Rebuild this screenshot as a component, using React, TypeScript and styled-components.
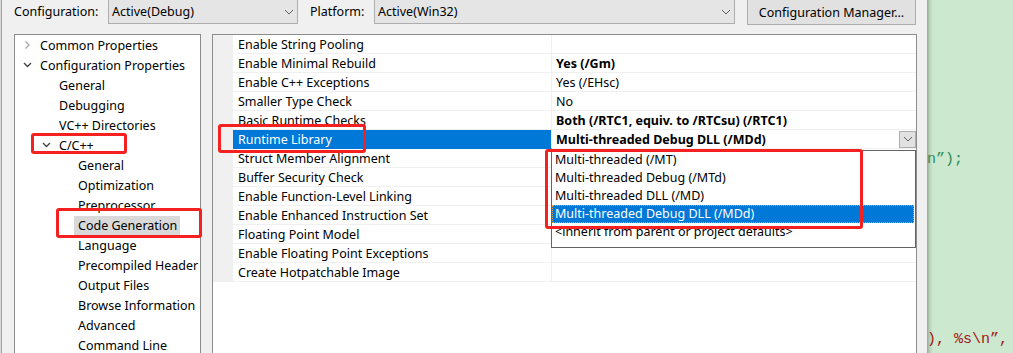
import React from 'react';
import styled, { createGlobalStyle } from 'styled-components';

const GlobalStyle = createGlobalStyle`
  html, body {
    margin: 0;
    padding: 0;
    background: #cce8cf;
  }
  body {
    font-family: "Noto Sans", "Liberation Sans", sans-serif;
    font-size: 12.5px;
    color: #000;
  }
`;

const Screen = styled.div`
  position: relative;
  display: flex;
  width: 1013px;
  height: 353px;
  overflow: hidden;
`;

const Dialog = styled.div`
  width: 903px;
  flex: none;
  display: flex;
  flex-direction: column;
  background: #f0f0f0;
  border-left: 1px solid #dadada;
  box-shadow: inset 1px 0 0 #a0a0a0;
  padding: 0 10px 0 13px;
`;

const Toolbar = styled.div`
  display: flex;
  align-items: flex-start;
  height: 35px;
  margin-top: -1px;
  flex: none;
`;

const Label = styled.div<{ w: number; ml?: number }>`
  width: ${p => p.w}px;
  margin-left: ${p => p.ml ?? 0}px;
  height: 25px;
  line-height: 25px;
  white-space: nowrap;
`;

const Combo = styled.div<{ w: number }>`
  width: ${p => p.w}px;
  height: 25px;
  box-sizing: border-box;
  border: 1px solid #adadad;
  background: #e5e5e5;
  display: flex;
  align-items: center;
  justify-content: space-between;
  padding: 0 3px 0 3px;
`;

const Button = styled.div`
  width: 169px;
  height: 26px;
  margin-left: 12px;
  box-sizing: border-box;
  border: 1px solid #adadad;
  background: #e1e1e1;
  display: flex;
  align-items: center;
  justify-content: center;
`;

const Main = styled.div`
  display: flex;
  gap: 11px;
  flex: 1;
  min-height: 0;
`;

const Panel = styled.div<{ w: number }>`
  width: ${p => p.w}px;
  height: 340px;
  flex: none;
  box-sizing: border-box;
  border: 1px solid #8c8c8c;
  background: #fff;
`;

const TreeRow = styled.div<{ level: number }>`
  display: flex;
  align-items: center;
  height: 20px;
  padding-left: ${p => 5 + p.level * 19}px;
  white-space: nowrap;
`;

const Twisty = styled.span`
  width: 16px;
  height: 20px;
  flex: none;
  display: flex;
  align-items: center;
`;

const TreeText = styled.span<{ selected?: boolean }>`
  padding: 0 3px 0 4px;
  height: 19px;
  line-height: 19px;
  background: ${p => (p.selected ? '#d9d9d9' : 'transparent')};
`;

const GridRow = styled.div`
  display: grid;
  grid-template-columns: 20px 319px 1fr;
  height: 19px;
`;

const Gutter = styled.div`
  background: #f0f0f0;
`;

const NameCell = styled.div<{ selected?: boolean }>`
  box-sizing: border-box;
  border-bottom: 1px solid #f0f0f0;
  border-right: 1px solid #f0f0f0;
  padding: 1px 0 0 5px;
  line-height: 17px;
  white-space: nowrap;
  background: ${p => (p.selected ? '#0078d7' : '#fff')};
  color: ${p => (p.selected ? '#fff' : '#000')};
  border-bottom-color: ${p => (p.selected ? '#0078d7' : '#f0f0f0')};
`;

const ValueCell = styled.div<{ bold?: boolean }>`
  position: relative;
  box-sizing: border-box;
  border-bottom: 1px solid #f0f0f0;
  padding: 1px 0 0 4px;
  line-height: 17px;
  white-space: nowrap;
  font-weight: ${p => (p.bold ? 700 : 400)};
  display: flex;
  align-items: center;
  justify-content: space-between;
`;

const DropButton = styled.span`
  width: 17px;
  height: 17px;
  box-sizing: border-box;
  border: 1px solid #adadad;
  background: #e1e1e1;
  display: flex;
  align-items: center;
  justify-content: center;
  margin-top: -1px;
`;

const DropList = styled.div`
  position: absolute;
  left: 551px;
  top: 150px;
  width: 365px;
  box-sizing: border-box;
  border: 1px solid #646464;
  background: #fff;
  padding-bottom: 6px;
`;

const DropItem = styled.div<{ selected?: boolean }>`
  height: 18px;
  line-height: 18px;
  padding-left: 3px;
  margin-right: 1px;
  white-space: nowrap;
  box-sizing: border-box;
  background: ${p => (p.selected ? '#0078d7' : '#fff')};
  color: ${p => (p.selected ? '#fff' : '#000')};
  outline: ${p => (p.selected ? '1px dotted #f0a030' : 'none')};
  outline-offset: -1px;
`;

const Editor = styled.div`
  flex: 1;
  background: linear-gradient(to right, rgba(0, 0, 0, 0.28), rgba(0, 0, 0, 0.08) 3px, rgba(0, 0, 0, 0) 6px), #cce8cf;
  padding-top: 151px;
  font-family: "Liberation Mono", "DejaVu Sans Mono", monospace;
  font-size: 15px;
  line-height: 18px;
  white-space: pre;
  overflow: hidden;
`;

const CodeLine = styled.div<{ color: string }>`
  height: 18px;
  color: ${p => p.color};
`;

const Mark = styled.div`
  position: absolute;
  box-sizing: border-box;
  border: 3px solid #f52020;
  border-radius: 3px;
`;

const Chevron: React.FC<{ open?: boolean; light?: boolean }> = ({ open, light }) => (
  <svg width="16" height="20" viewBox="0 0 16 20">
    {open ? (
      <polyline points="4,8 7.5,11.5 11,8" fill="none" stroke="#404040" strokeWidth="1.3" />
    ) : (
      <polyline points="5.5,6.5 9,10 5.5,13.5" fill="none" stroke={light ? '#a6a6a6' : '#404040'} strokeWidth="1.3" />
    )}
  </svg>
);

const ComboArrow: React.FC = () => (
  <svg width="10" height="6" viewBox="0 0 10 6">
    <polyline points="1,1 5,5 9,1" fill="none" stroke="#606060" strokeWidth="1" />
  </svg>
);

const tree: { text: string; level: number; twisty?: 'open' | 'closed'; selected?: boolean }[] = [
  { text: 'Common Properties', level: 0, twisty: 'closed' },
  { text: 'Configuration Properties', level: 0, twisty: 'open' },
  { text: 'General', level: 1 },
  { text: 'Debugging', level: 1 },
  { text: 'VC++ Directories', level: 1 },
  { text: 'C/C++', level: 1, twisty: 'open' },
  { text: 'General', level: 2 },
  { text: 'Optimization', level: 2 },
  { text: 'Preprocessor', level: 2 },
  { text: 'Code Generation', level: 2, selected: true },
  { text: 'Language', level: 2 },
  { text: 'Precompiled Header', level: 2 },
  { text: 'Output Files', level: 2 },
  { text: 'Browse Information', level: 2 },
  { text: 'Advanced', level: 2 },
  { text: 'Command Line', level: 2 },
];

const props: { name: string; value?: string; bold?: boolean; selected?: boolean }[] = [
  { name: 'Enable String Pooling' },
  { name: 'Enable Minimal Rebuild', value: 'Yes (/Gm)', bold: true },
  { name: 'Enable C++ Exceptions', value: 'Yes (/EHsc)' },
  { name: 'Smaller Type Check', value: 'No' },
  { name: 'Basic Runtime Checks', value: 'Both (/RTC1, equiv. to /RTCsu) (/RTC1)', bold: true },
  { name: 'Runtime Library', value: 'Multi-threaded Debug DLL (/MDd)', bold: true, selected: true },
  { name: 'Struct Member Alignment' },
  { name: 'Buffer Security Check' },
  { name: 'Enable Function-Level Linking' },
  { name: 'Enable Enhanced Instruction Set' },
  { name: 'Floating Point Model' },
  { name: 'Enable Floating Point Exceptions' },
  { name: 'Create Hotpatchable Image' },
];

const options = [
  'Multi-threaded (/MT)',
  'Multi-threaded Debug (/MTd)',
  'Multi-threaded DLL (/MD)',
  'Multi-threaded Debug DLL (/MDd)',
  '<inherit from parent or project defaults>',
];

const App: React.FC = () => (
  <>
    <GlobalStyle />
    <Screen>
      <Dialog>
        <Toolbar>
          <Label w={94}>Configuration:</Label>
          <Combo w={190}>
            <span>Active(Debug)</span>
            <ComboArrow />
          </Combo>
          <Label w={64} ml={12}>Platform:</Label>
          <Combo w={361}>
            <span>Active(Win32)</span>
            <ComboArrow />
          </Combo>
          <Button>Configuration Manager...</Button>
        </Toolbar>
        <Main>
          <Panel w={187}>
            {tree.map((t, i) => (
              <TreeRow key={i} level={t.level}>
                <Twisty>
                  {t.twisty && <Chevron open={t.twisty === 'open'} light={t.twisty === 'closed'} />}
                </Twisty>
                <TreeText selected={t.selected}>{t.text}</TreeText>
              </TreeRow>
            ))}
          </Panel>
          <Panel w={705}>
            {props.map((p, i) => (
              <GridRow key={i}>
                <Gutter />
                <NameCell selected={p.selected}>{p.name}</NameCell>
                <ValueCell bold={p.bold}>
                  <span>{p.value}</span>
                  {p.selected && (
                    <DropButton>
                      <ComboArrow />
                    </DropButton>
                  )}
                </ValueCell>
              </GridRow>
            ))}
          </Panel>
        </Main>
      </Dialog>
      <Editor>
        <CodeLine color="#2e8b57">{'n”);'}</CodeLine>
        {Array.from({ length: 9 }).map((_, i) => (
          <CodeLine key={i} color="#000" />
        ))}
        <CodeLine color="#a31515">{'), %s\\n”,'}</CodeLine>
      </Editor>

      <DropList>
        {options.map((o, i) => (
          <DropItem key={i} selected={i === 3}>{o}</DropItem>
        ))}
      </DropList>

      <Mark style={{ left: 31, top: 133, width: 96, height: 21 }} />
      <Mark style={{ left: 56, top: 208, width: 146, height: 30 }} />
      <Mark style={{ left: 218, top: 124, width: 148, height: 29 }} />
      <Mark style={{ left: 545, top: 149, width: 318, height: 80 }} />
    </Screen>
  </>
);

export default App;
